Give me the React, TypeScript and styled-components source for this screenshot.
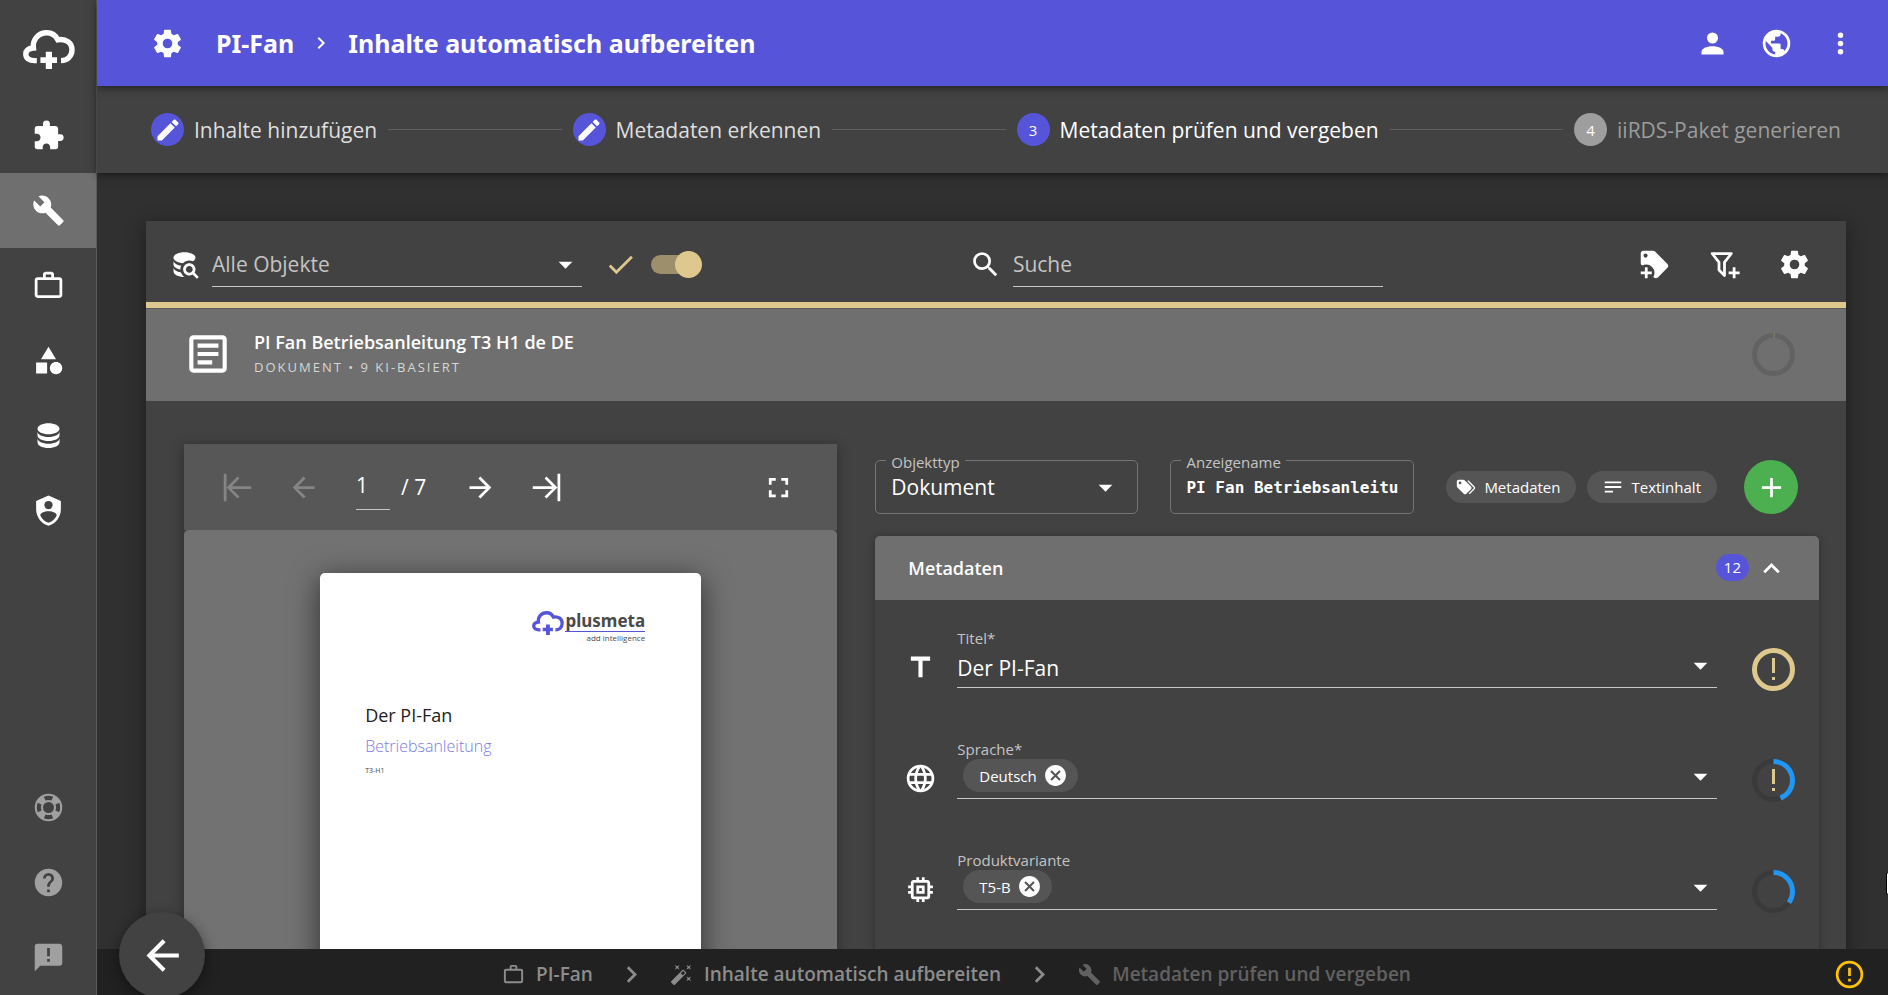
import React from "react";
import styled, { createGlobalStyle, css } from "styled-components";

const color = {
  primary: "#5654d8",
  gold: "#dec88d",
  surface: "#424242",
  page: "#303030",
  bar: "#6f6f6f",
  chip: "#555555",
  footer: "#212121",
  textSoft: "#c4c4c4",
  muted: "#a0a0a0",
  blue: "#2196f3",
};

const GlobalStyle = createGlobalStyle`
  * { box-sizing: border-box; }
  body {
    margin: 0;
    background: ${color.page};
    color: #fff;
    font-family: "Open Sans", "Noto Sans", sans-serif;
    font-size: 21px;
  }
  button, input, select { font: inherit; color: inherit; }
`;

const paths = {
  puzzle:
    "M20.5,11H19V7C19,5.89 18.1,5 17,5H13V3.5A2.5,2.5 0 0,0 10.5,1A2.5,2.5 0 0,0 8,3.5V5H4A2,2 0 0,0 2,7V10.8H3.5C5,10.8 6.2,12 6.2,13.5C6.2,15 5,16.2 3.5,16.2H2V20A2,2 0 0,0 4,22H7.8V20.5C7.8,19 9,17.8 10.5,17.8C12,17.8 13.2,19 13.2,20.5V22H17A2,2 0 0,0 19,20V16H20.5A2.5,2.5 0 0,0 23,13.5A2.5,2.5 0 0,0 20.5,11Z",
  wrench:
    "M22.7,19L13.6,9.9C14.5,7.6 14,4.9 12.1,3C10.1,1 7.1,0.6 4.7,1.7L9,6L6,9L1.6,4.7C0.4,7.1 0.9,10.1 2.9,12.1C4.8,14 7.5,14.5 9.8,13.6L18.9,22.7C19.3,23.1 19.9,23.1 20.3,22.7L22.6,20.4C23.1,20 23.1,19.3 22.7,19Z",
  briefcase:
    "M20,6C20.58,6 21.05,6.2 21.42,6.59C21.8,7 22,7.45 22,8V19C22,19.55 21.8,20 21.42,20.41C21.05,20.8 20.58,21 20,21H4C3.42,21 2.95,20.8 2.58,20.41C2.2,20 2,19.55 2,19V8C2,7.45 2.2,7 2.58,6.59C2.95,6.2 3.42,6 4,6H8V4C8,3.42 8.2,2.95 8.58,2.58C8.95,2.2 9.42,2 10,2H14C14.58,2 15.05,2.2 15.42,2.58C15.8,2.95 16,3.42 16,4V6H20M4,8V19H20V8H4M14,6V4H10V6H14Z",
  shape:
    "M11,13.5V21.5H3V13.5H11M12,2L17.5,11H6.5L12,2M17.5,13C20,13 22,15 22,17.5C22,20 20,22 17.5,22C15,22 13,20 13,17.5C13,15 15,13 17.5,13Z",
  database:
    "M12,3C7.58,3 4,4.79 4,7C4,9.21 7.58,11 12,11C16.42,11 20,9.21 20,7C20,4.79 16.42,3 12,3M4,9V12C4,14.21 7.58,16 12,16C16.42,16 20,14.21 20,12V9C20,11.21 16.42,13 12,13C7.58,13 4,11.21 4,9M4,14V17C4,19.21 7.58,21 12,21C16.42,21 20,19.21 20,17V14C20,16.21 16.42,18 12,18C7.58,18 4,16.21 4,14Z",
  shield:
    "M12,1L3,5V11C3,16.55 6.84,21.74 12,23C17.16,21.74 21,16.55 21,11V5L12,1M12,5A3,3 0 0,1 15,8A3,3 0 0,1 12,11A3,3 0 0,1 9,8A3,3 0 0,1 12,5M17.13,17C15.92,18.85 14.11,20.24 12,20.92C9.89,20.24 8.08,18.85 6.87,17C6.53,16.5 6.24,16 6,15.47C6,13.82 8.71,12.47 12,12.47C15.29,12.47 18,13.79 18,15.47C17.76,16 17.47,16.5 17.13,17Z",
  lifebuoy:
    "M19.79,15.41C20.74,13.24 20.74,10.75 19.79,8.59L17.05,9.83C17.65,11.21 17.65,12.78 17.06,14.17L19.79,15.41M15.42,4.21C13.25,3.26 10.76,3.26 8.59,4.21L9.83,6.94C11.22,6.35 12.79,6.35 14.18,6.95L15.42,4.21M4.21,8.58C3.26,10.76 3.26,13.24 4.21,15.42L6.95,14.17C6.35,12.79 6.35,11.21 6.95,9.82L4.21,8.58M8.59,19.79C10.76,20.74 13.25,20.74 15.42,19.78L14.18,17.05C12.8,17.65 11.22,17.65 9.84,17.06L8.59,19.79M12,2A10,10 0 0,1 22,12A10,10 0 0,1 12,22A10,10 0 0,1 2,12A10,10 0 0,1 12,2M12,8A4,4 0 0,0 8,12A4,4 0 0,0 12,16A4,4 0 0,0 16,12A4,4 0 0,0 12,8Z",
  help:
    "M15.07,11.25L14.17,12.17C13.45,12.89 13,13.5 13,15H11V14.5C11,13.39 11.45,12.39 12.17,11.67L13.41,10.41C13.78,10.05 14,9.55 14,9C14,7.89 13.1,7 12,7A2,2 0 0,0 10,9H8A4,4 0 0,1 12,5A4,4 0 0,1 16,9C16,9.88 15.64,10.67 15.07,11.25M13,19H11V17H13M12,2A10,10 0 0,0 2,12A10,10 0 0,0 12,22A10,10 0 0,0 22,12C22,6.47 17.5,2 12,2Z",
  feedback:
    "M13,11H11V5H13M13,15H11V13H13M20,2H4A2,2 0 0,0 2,4V22L6,18H20A2,2 0 0,0 22,16V4C22,2.89 21.1,2 20,2Z",
  cog:
    "M12,15.5A3.5,3.5 0 0,1 8.5,12A3.5,3.5 0 0,1 12,8.5A3.5,3.5 0 0,1 15.5,12A3.5,3.5 0 0,1 12,15.5M19.43,12.97C19.47,12.65 19.5,12.33 19.5,12C19.5,11.67 19.47,11.34 19.43,11L21.54,9.37C21.73,9.22 21.78,8.95 21.66,8.73L19.66,5.27C19.54,5.05 19.27,4.96 19.05,5.05L16.56,6.05C16.04,5.66 15.5,5.32 14.87,5.07L14.5,2.42C14.46,2.18 14.25,2 14,2H10C9.75,2 9.54,2.18 9.5,2.42L9.13,5.07C8.5,5.32 7.96,5.66 7.44,6.05L4.95,5.05C4.73,4.96 4.46,5.05 4.34,5.27L2.34,8.73C2.21,8.95 2.27,9.22 2.46,9.37L4.57,11C4.53,11.34 4.5,11.67 4.5,12C4.5,12.33 4.53,12.65 4.57,12.97L2.46,14.63C2.27,14.78 2.21,15.05 2.34,15.27L4.34,18.73C4.46,18.95 4.73,19.03 4.95,18.95L7.44,17.94C7.96,18.34 8.5,18.68 9.13,18.93L9.5,21.58C9.54,21.82 9.75,22 10,22H14C14.25,22 14.46,21.82 14.5,21.58L14.87,18.93C15.5,18.67 16.04,18.34 16.56,17.94L19.05,18.95C19.27,19.03 19.54,18.95 19.66,18.73L21.66,15.27C21.78,15.05 21.73,14.78 21.54,14.63L19.43,12.97Z",
  earth:
    "M17.9,17.39C17.64,16.59 16.89,16 16,16H15V13A1,1 0 0,0 14,12H8V10H10A1,1 0 0,0 11,9V7H13A2,2 0 0,0 15,5V4.59C17.93,5.77 20,8.64 20,12C20,14.08 19.2,15.97 17.9,17.39M11,19.93C7.05,19.44 4,16.08 4,12C4,11.38 4.08,10.78 4.21,10.21L9,15V16A2,2 0 0,0 11,18M12,2A10,10 0 0,0 2,12A10,10 0 0,0 12,22A10,10 0 0,0 22,12A10,10 0 0,0 12,2Z",
  account:
    "M12,4A4,4 0 0,1 16,8A4,4 0 0,1 12,12A4,4 0 0,1 8,8A4,4 0 0,1 12,4M12,14C16.42,14 20,15.79 20,18V20H4V18C4,15.79 7.58,14 12,14Z",
  dots:
    "M12,16A2,2 0 0,1 14,18A2,2 0 0,1 12,20A2,2 0 0,1 10,18A2,2 0 0,1 12,16M12,10A2,2 0 0,1 14,12A2,2 0 0,1 12,14A2,2 0 0,1 10,12A2,2 0 0,1 12,10M12,4A2,2 0 0,1 14,6A2,2 0 0,1 12,8A2,2 0 0,1 10,6A2,2 0 0,1 12,4Z",
  pencil:
    "M20.71,7.04C21.1,6.65 21.1,6 20.71,5.63L18.37,3.29C18,2.9 17.35,2.9 16.96,3.29L15.12,5.12L18.87,8.87M3,17.25V21H6.75L17.81,9.93L14.06,6.18L3,17.25Z",
  databaseSearch:
    "M18.68,12.32C16.92,10.56 14.07,10.57 12.32,12.33C10.56,14.09 10.56,16.94 12.32,18.69C13.81,20.17 16.11,20.43 17.89,19.32L21,22.39L22.39,21L19.3,17.89C20.43,16.12 20.17,13.8 18.68,12.32M17.27,17.27C16.29,18.25 14.71,18.24 13.73,17.27C12.76,16.29 12.76,14.71 13.74,13.73C14.71,12.76 16.29,12.76 17.27,13.73C18.24,14.71 18.24,16.29 17.27,17.27M10.9,20.1C10.25,19.44 9.74,18.65 9.42,17.78C6.27,17.25 4,15.76 4,14V17C4,19.21 7.58,21 12,21C11.6,20.74 11.23,20.44 10.9,20.1M4,9V12C4,13.68 6.07,15.12 9,15.7C9,15.63 9,15.57 9,15.5C9,14.57 9.2,13.65 9.58,12.81C6.34,12.3 4,10.79 4,9M12,3C7.58,3 4,4.79 4,7C4,9 7,10.68 10.85,11H10.9C12.1,9.74 13.76,9 15.5,9C16.41,9 17.31,9.19 18.14,9.56C19.17,9.09 19.87,8.12 20,7C20,4.79 16.42,3 12,3Z",
  magnify:
    "M9.5,3A6.5,6.5 0 0,1 16,9.5C16,11.11 15.41,12.59 14.44,13.73L14.71,14H15.5L20.5,19L19,20.5L14,15.5V14.71L13.73,14.44C12.59,15.41 11.11,16 9.5,16A6.5,6.5 0 0,1 3,9.5A6.5,6.5 0 0,1 9.5,3M9.5,5C7,5 5,7 5,9.5C5,12 7,14 9.5,14C12,14 14,12 14,9.5C14,7 12,5 9.5,5Z",
  check: "M21,7L9,19L3.5,13.5L4.91,12.09L9,16.17L19.59,5.59L21,7Z",
  caret: "M7,10L12,15L17,10H7Z",
  tagPlus:
    "M21.41,11.58L12.41,2.58C12.04,2.21 11.53,2 11,2H4A2,2 0 0,0 2,4V11C2,11.53 2.21,12.04 2.59,12.41L3,12.81C3.9,12.27 4.94,12 6,12A6,6 0 0,1 12,18C12,19.06 11.72,20.09 11.18,21L11.58,21.4C11.95,21.78 12.47,22 13,22C13.53,22 14.04,21.79 14.41,21.41L21.41,14.41C21.79,14.04 22,13.53 22,13C22,12.47 21.79,11.96 21.41,11.58M5.5,7A1.5,1.5 0 0,1 4,5.5A1.5,1.5 0 0,1 5.5,4A1.5,1.5 0 0,1 7,5.5A1.5,1.5 0 0,1 5.5,7M10,19H7V22H5V19H2V17H5V14H7V17H10V19Z",
  filterPlus:
    "M15 17H18V14H20V17H23V19H20V22H18V19H15V17M13 19.88C13.04 20.18 12.94 20.5 12.71 20.71C12.32 21.1 11.69 21.1 11.3 20.71L7.29 16.7C7.06 16.47 6.96 16.16 7 15.87V10.75L2.21 4.62C1.87 4.19 1.95 3.56 2.38 3.22C2.57 3.08 2.78 3 3 3H17C17.22 3 17.43 3.08 17.62 3.22C18.05 3.56 18.13 4.19 17.79 4.62L13 10.75V19.88M5.04 5L9 10.06V15.58L11 17.58V10.05L14.96 5H5.04Z",
  document:
    "M5,3C3.89,3 3,3.89 3,5V19C3,20.11 3.89,21 5,21H19C20.11,21 21,20.11 21,19V5C21,3.89 20.11,3 19,3H5M5,5H19V19H5V5M7,7V9H17V7H7M7,11V13H17V11H7M7,15V17H14V15H7Z",
  arrowLeft: "M20,11V13H8L13.5,18.5L12.08,19.92L4.16,12L12.08,4.08L13.5,5.5L8,11H20Z",
  arrowRight: "M4,11V13H16L10.5,18.5L11.92,19.92L19.84,12L11.92,4.08L10.5,5.5L16,11H4Z",
  first: "M4.08,11.92L12,4L13.41,5.41L7.83,11H22V13H7.83L13.41,18.59L12,20L4.08,12.08V11.92M2,22V2H4V22H2Z",
  last: "M19.92,12.08L12,20L10.59,18.59L16.17,13H2V11H16.17L10.59,5.41L12,4L19.92,11.92V12.08M22,2V22H20V2H22Z",
  fullscreen: "M5,5H10V7H7V10H5V5M14,5H19V10H17V7H14V5M17,14H19V19H14V17H17V14M10,17V19H5V14H7V17H10Z",
  tags:
    "M5.5,9A1.5,1.5 0 0,0 7,7.5A1.5,1.5 0 0,0 5.5,6A1.5,1.5 0 0,0 4,7.5A1.5,1.5 0 0,0 5.5,9M17.41,11.58C17.77,11.94 18,12.44 18,13C18,13.55 17.78,14.05 17.41,14.41L12.41,19.41C12.05,19.77 11.55,20 11,20C10.45,20 9.95,19.78 9.58,19.41L2.59,12.42C2.22,12.05 2,11.55 2,11V6C2,4.89 2.89,4 4,4H9C9.55,4 10.05,4.22 10.41,4.58L17.41,11.58M13.54,5.71L14.54,4.71L21.41,11.58C21.78,11.94 22,12.45 22,13C22,13.55 21.78,14.05 21.42,14.41L16.04,19.79L15.04,18.79L20.75,13L13.54,5.71Z",
  lines: "M21,6V8H3V6H21M3,18H12V16H3V18M3,13H21V11H3V13Z",
  plus: "M19,13H13V19H11V13H5V11H11V5H13V11H19V13Z",
  chevronUp: "M7.41,15.41L12,10.83L16.59,15.41L18,14L12,8L6,14L7.41,15.41Z",
  chevronRight: "M8.59,16.58L13.17,12L8.59,7.41L10,6L16,12L10,18L8.59,16.58Z",
  title: "M5,4V7H10.5V19H13.5V7H19V4H5Z",
  web:
    "M16.36,14C16.44,13.34 16.5,12.68 16.5,12C16.5,11.32 16.44,10.66 16.36,10H19.74C19.9,10.64 20,11.31 20,12C20,12.69 19.9,13.36 19.74,14M14.59,19.56C15.19,18.45 15.65,17.25 15.97,16H18.92C17.96,17.65 16.43,18.93 14.59,19.56M14.34,14H9.66C9.56,13.34 9.5,12.68 9.5,12C9.5,11.32 9.56,10.65 9.66,10H14.34C14.43,10.65 14.5,11.32 14.5,12C14.5,12.68 14.43,13.34 14.34,14M12,19.96C11.17,18.76 10.5,17.43 10.09,16H13.91C13.5,17.43 12.83,18.76 12,19.96M8,8H5.08C6.03,6.34 7.57,5.06 9.4,4.44C8.8,5.55 8.35,6.75 8,8M5.08,16H8C8.35,17.25 8.8,18.45 9.4,19.56C7.57,18.93 6.03,17.65 5.08,16M4.26,14C4.1,13.36 4,12.69 4,12C4,11.31 4.1,10.64 4.26,10H7.64C7.56,10.66 7.5,11.32 7.5,12C7.5,12.68 7.56,13.34 7.64,14M12,4.03C12.83,5.23 13.5,6.57 13.91,8H10.09C10.5,6.57 11.17,5.23 12,4.03M18.92,8H15.97C15.65,6.75 15.19,5.55 14.59,4.44C16.43,5.07 17.96,6.34 18.92,8M12,2C6.47,2 2,6.5 2,12A10,10 0 0,0 12,22A10,10 0 0,0 22,12A10,10 0 0,0 12,2Z",
  chip:
    "M17,17H7V7H17M21,11V9H19V7C19,5.89 18.1,5 17,5H15V3H13V5H11V3H9V5H7C5.89,5 5,5.89 5,7V9H3V11H5V13H3V15H5V17A2,2 0 0,0 7,19H9V21H11V19H13V21H15V19H17A2,2 0 0,0 19,17V15H21V13H19V11M13,13H11V11H13M15,9H9V15H15V9Z",
  closeCircle:
    "M12,2C17.53,2 22,6.47 22,12C22,17.53 17.53,22 12,22C6.47,22 2,17.53 2,12C2,6.47 6.47,2 12,2M15.59,7L12,10.59L8.41,7L7,8.41L10.59,12L7,15.59L8.41,17L12,13.41L15.59,17L17,15.59L13.41,12L17,8.41L15.59,7Z",
  alert:
    "M11,15H13V17H11V15M11,7H13V13H11V7M12,2C6.47,2 2,6.5 2,12A10,10 0 0,0 12,22A10,10 0 0,0 22,12A10,10 0 0,0 12,2M12,20A8,8 0 0,1 4,12A8,8 0 0,1 12,4A8,8 0 0,1 20,12A8,8 0 0,1 12,20Z",
  wand:
    "M7.5,5.6L5,7L6.4,4.5L5,2L7.5,3.4L10,2L8.6,4.5L10,7L7.5,5.6M19.5,15.4L22,14L20.6,16.5L22,19L19.5,17.6L17,19L18.4,16.5L17,14L19.5,15.4M22,2L20.6,4.5L22,7L19.5,5.6L17,7L18.4,4.5L17,2L19.5,3.4L22,2M13.34,12.78L15.78,10.34L13.66,8.22L11.22,10.66L13.34,12.78M14.37,7.29L16.71,9.63C17.1,10 17.1,10.65 16.71,11.04L5.04,22.71C4.65,23.1 4,23.1 3.63,22.71L1.29,20.37C0.9,20 0.9,19.35 1.29,18.96L12.96,7.29C13.35,6.9 14,6.9 14.37,7.29Z",
};

type IconName = keyof typeof paths;

const Svg = styled.svg`
  display: block;
  flex: none;
  fill: currentColor;
`;

function Icon({ name, size = 33 }: { name: IconName; size?: number }) {
  return (
    <Svg width={size} height={size} viewBox="0 0 24 24" aria-hidden="true">
      <path d={paths[name]} fillRule="evenodd" />
    </Svg>
  );
}

function CloudLogo({ width }: { width: number }) {
  return (
    <Svg width={width} height={(width * 3) / 4} viewBox="0 0 52 39" aria-hidden="true">
      <path
        d="M13.8 30.6H11.4C6.2 30.6 2.8 28 2.8 24.2C2.8 20.6 5.6 18.4 10.4 18C9.2 9.6 15.6 2.8 23.6 2.8C28.8 2.8 32.6 5.4 34.8 9.8C43 8.2 49 13 49 19.8C49 26.2 44.4 30.6 38 30.6"
        fill="none"
        stroke="currentColor"
        strokeWidth="5.4"
      />
      <path d="M22.8 21.8H29V27.3H34V33H29V39H22.8V33H17.4V27.3H22.8Z" />
    </Svg>
  );
}

/* ---------- Shell ---------- */

const Shell = styled.div`
  display: flex;
  height: 100vh;
  overflow: hidden;
`;

const Sidebar = styled.nav`
  display: flex;
  flex-direction: column;
  flex: none;
  width: 97px;
  background: ${color.surface};
  border-right: 1px solid #5c5c5c;
`;

const Brand = styled.a`
  display: flex;
  justify-content: center;
  flex: none;
  height: 98px;
  padding: 30px 0 0 2px;
  color: #fff;
`;

const SideLink = styled.a<{ $active?: boolean; $muted?: boolean }>`
  display: flex;
  align-items: center;
  justify-content: center;
  flex: none;
  height: 75px;
  color: ${(p) => (p.$muted ? color.muted : "#fff")};
  background: ${(p) => (p.$active ? color.bar : "transparent")};
`;

const Spacer = styled.div`
  flex: 1;
`;

const Column = styled.div`
  display: flex;
  flex-direction: column;
  flex: 1;
  min-width: 0;
`;

const Header = styled.header`
  display: flex;
  align-items: center;
  flex: none;
  height: 86px;
  padding: 0 16px 0 37px;
  background: ${color.primary};
  box-shadow: 0 2px 8px rgba(0, 0, 0, 0.5);
  z-index: 3;
`;

const IconButton = styled.button<{ $width?: number; $color?: string }>`
  display: flex;
  align-items: center;
  justify-content: center;
  flex: none;
  width: ${(p) => p.$width ?? 66}px;
  height: 66px;
  padding: 0;
  border: 0;
  background: none;
  color: ${(p) => p.$color ?? "#fff"};
  cursor: pointer;
  &:disabled {
    color: #858585;
  }
`;

const Crumbs = styled.div`
  display: flex;
  align-items: center;
  flex: 1;
  gap: 15px;
  padding-left: 16px;
  font-family: "Noto Sans", "Open Sans", sans-serif;
  font-size: 25px;
  font-weight: 700;
  white-space: nowrap;
  a {
    color: inherit;
    text-decoration: none;
  }
  h1 {
    margin: 0;
    font: inherit;
  }
`;

const Stepper = styled.ol`
  display: flex;
  align-items: center;
  gap: 11px;
  flex: none;
  height: 87px;
  margin: 0;
  padding: 0 47px 0 54px;
  list-style: none;
  background: ${color.surface};
  box-shadow: 0 2px 8px rgba(0, 0, 0, 0.5);
  z-index: 2;
`;

const Step = styled.li<{ $state: "done" | "active" | "open" }>`
  display: flex;
  align-items: center;
  gap: 10px;
  white-space: nowrap;
  color: ${(p) => (p.$state === "done" ? "#dedede" : p.$state === "active" ? "#fff" : "#9c9c9c")};
`;

const StepDot = styled.span<{ $open?: boolean }>`
  display: flex;
  align-items: center;
  justify-content: center;
  width: 33px;
  height: 33px;
  border-radius: 50%;
  background: ${(p) => (p.$open ? "#9e9e9e" : color.primary)};
  color: #fff;
  font-size: 15px;
`;

const StepLine = styled.li`
  flex: 1;
  height: 1px;
  background: #5e5e5e;
`;

const Main = styled.main`
  flex: 1;
  min-height: 0;
  padding: 48px 42px 0 49px;
  overflow: auto;
  scrollbar-width: none;
`;

const Card = styled.section`
  background: ${color.surface};
  box-shadow: 0 4px 18px rgba(0, 0, 0, 0.4);
`;

/* ---------- Object toolbar ---------- */

const Toolbar = styled.div`
  display: grid;
  grid-template-columns: 14fr 15fr;
  align-items: center;
  height: 87px;
  padding: 6px 19px 0 22px;
  border-bottom: 6px solid ${color.gold};
`;

const ToolGroup = styled.div`
  display: flex;
  align-items: center;
  gap: 11px;
`;

const Caret = styled.span`
  position: absolute;
  right: 0;
  top: 1px;
  color: #fff;
  pointer-events: none;
`;

const Underlined = styled.div<{ $width?: number }>`
  display: flex;
  align-items: center;
  position: relative;
  height: 40px;
  border-bottom: 1px solid #c6c6c6;
  color: ${color.textSoft};
  ${(p) =>
    p.$width
      ? css`
          flex: 0 1 ${p.$width}px;
          height: 44px;
          ${Caret} {
            top: 5px;
          }
        `
      : ""}
`;

const fieldText = css`
  width: 100%;
  min-width: 0;
  height: 38px;
  padding: 0;
  border: 0;
  outline: 0;
  background: none;
  appearance: none;
  &::placeholder {
    color: ${color.textSoft};
    opacity: 1;
  }
`;

const Select = styled.select<{ $bright?: boolean }>`
  ${fieldText}
  color: ${(p) => (p.$bright ? "#fff" : "inherit")};
  option {
    color: #fff;
    background: ${color.surface};
  }
`;

const TextInput = styled.input`
  ${fieldText}
`;

const CheckMark = styled.span`
  margin-left: 11px;
  color: ${color.gold};
`;

const Switch = styled.input`
  appearance: none;
  position: relative;
  width: 50px;
  height: 19px;
  margin: 0 0 0 3px;
  border-radius: 10px;
  background: #9d8f6b;
  &::after {
    content: "";
    position: absolute;
    right: -1px;
    top: -4px;
    width: 27px;
    height: 27px;
    border-radius: 50%;
    background: ${color.gold};
  }
`;

const Actions = styled.div`
  display: flex;
  gap: 4px;
  margin-left: auto;
`;

/* ---------- Document row ---------- */

const DocRow = styled.div`
  display: flex;
  align-items: center;
  height: 93px;
  padding: 0 51px 2px 37px;
  border-top: 1px solid #5c5c5c;
  background: ${color.bar};
`;

const DocText = styled.div`
  flex: 1;
  padding-left: 21px;
  h2 {
    margin: 0;
    font-size: 18px;
    font-weight: 600;
    line-height: 26px;
  }
  p {
    margin: 0;
    font-size: 13px;
    line-height: 24px;
    letter-spacing: 2px;
    text-transform: uppercase;
    color: #d6d6d6;
  }
`;

const Split = styled.div`
  display: grid;
  grid-template-columns: 9fr 13fr;
  gap: 38px;
  padding: 43px 27px 40px 38px;
`;

/* ---------- Viewer ---------- */

const Viewer = styled.div`
  display: flex;
  flex-direction: column;
  min-height: 640px;
  box-shadow: 0 2px 12px rgba(0, 0, 0, 0.35);
`;

const ViewerBar = styled.div`
  display: flex;
  align-items: center;
  height: 86px;
  padding: 0 26px 0 20px;
  background: #575757;
`;

const PageInput = styled.input`
  width: 34px;
  height: 46px;
  margin: 0 11px 0 20px;
  padding: 0 0 3px;
  border: 0;
  border-bottom: 1px solid #c6c6c6;
  outline: 0;
  background: none;
`;

const PageCount = styled.span`
  width: 46px;
  white-space: pre;
`;

const Canvas = styled.div`
  display: flex;
  justify-content: center;
  flex: 1;
  padding-top: 43px;
  border-radius: 5px 5px 0 0;
  background: #727272;
`;

const Sheet = styled.article`
  width: 381px;
  padding: 38px 56px 0 45px;
  border-radius: 5px;
  background: #fff;
  color: #222;
  box-shadow: 0 6px 30px rgba(0, 0, 0, 0.6);
  h3 {
    margin: 58px 0 0;
    font-size: 18px;
    font-weight: 400;
    line-height: 26px;
  }
  h4 {
    margin: 4px 0 0;
    font-size: 16px;
    font-weight: 300;
    line-height: 28px;
    color: #7d7be2;
  }
  p {
    margin: 4px 0 0;
    font-size: 7px;
    line-height: 14px;
    color: #444;
  }
`;

const SheetLogo = styled.div`
  display: flex;
  justify-content: flex-end;
  gap: 1px;
  color: ${color.primary};
`;

const WordMark = styled.div`
  display: flex;
  flex-direction: column;
  align-items: flex-end;
  color: #4a4a4a;
  strong {
    font-family: "Noto Sans", sans-serif;
    font-size: 17px;
    font-weight: 700;
    line-height: 20px;
    border-bottom: 1px solid ${color.primary};
  }
  span {
    font-size: 8px;
    line-height: 12px;
  }
`;

/* ---------- Metadata ---------- */

const Details = styled.div`
  min-width: 0;
  padding-top: 16px;
`;

const DetailsBar = styled.div`
  display: flex;
  align-items: center;
  margin-bottom: 22px;
  padding-right: 21px;
`;

const Outlined = styled.div<{ $grow: number }>`
  display: flex;
  align-items: center;
  position: relative;
  flex: ${(p) => p.$grow} 1 0;
  min-width: 0;
  height: 54px;
  margin-right: 32px;
  padding: 0 15px;
  border: 1px solid #757575;
  border-radius: 5px;
  label {
    position: absolute;
    top: -9px;
    left: 10px;
    padding: 0 5px;
    background: ${color.surface};
    color: ${color.textSoft};
    font-size: 15px;
    line-height: 20px;
  }
  ${Caret} {
    right: 15px;
    top: 10px;
  }
`;

const MonoInput = styled(TextInput)`
  font-family: "DejaVu Sans Mono", monospace;
  font-size: 16px;
  font-weight: 700;
`;

const PillButton = styled.button<{ $inset: number }>`
  display: flex;
  align-items: center;
  flex: none;
  gap: 7px;
  height: 32px;
  margin-right: 11px;
  padding: 0 16px 0 ${(p) => p.$inset}px;
  border: 0;
  border-radius: 16px;
  background: ${color.chip};
  font-size: 15px;
  white-space: nowrap;
`;

const AddButton = styled.button`
  display: flex;
  align-items: center;
  justify-content: center;
  flex: none;
  width: 54px;
  height: 54px;
  margin-left: 16px;
  padding: 0;
  border: 0;
  border-radius: 50%;
  background: #4caf50;
`;

const Panel = styled.section`
  padding-bottom: 40px;
  border-radius: 5px;
  box-shadow: 0 1px 8px rgba(0, 0, 0, 0.3);
`;

const PanelHead = styled.button`
  display: flex;
  align-items: center;
  width: 100%;
  height: 64px;
  padding: 0 31px 0 33px;
  border: 0;
  border-radius: 5px 5px 0 0;
  background: ${color.bar};
  font-size: 18px;
  font-weight: 600;
  text-align: left;
`;

const Count = styled.span`
  margin: 0 6px 2px auto;
  padding: 0 8px;
  border-radius: 14px;
  background: ${color.primary};
  font-size: 15px;
  font-weight: 400;
  line-height: 27px;
`;

const Row = styled.div`
  display: flex;
  align-items: flex-start;
  height: 111px;
  padding: 28px 24px 0 29px;
`;

const RowIcon = styled.span`
  padding-top: 23px;
`;

const RowField = styled.div`
  flex: 1;
  min-width: 0;
  margin: 0 35px 0 20px;
  label {
    display: block;
    color: ${color.textSoft};
    font-size: 15px;
    line-height: 20px;
  }
`;

const RowStatus = styled.span`
  padding-top: 20px;
`;

const Chip = styled.span`
  display: flex;
  align-items: center;
  flex: none;
  gap: 6px;
  height: 33px;
  margin: 0 8px 6px 6px;
  padding: 0 10px 0 16px;
  border-radius: 17px;
  background: ${color.chip};
  color: #fff;
  font-size: 15px;
  button {
    display: flex;
    padding: 0;
    border: 0;
    background: none;
    color: #fff;
  }
`;

function Ring({
  percent,
  stroke = color.blue,
  warn,
}: {
  percent: number;
  stroke?: string;
  warn?: boolean;
}) {
  return (
    <Svg width={43} height={43} viewBox="0 0 43 43" role="img" aria-label={`${percent} %`}>
      <circle cx="21.5" cy="21.5" r="19" fill="none" stroke="rgba(0,0,0,0.11)" strokeWidth="5" />
      <circle
        cx="21.5"
        cy="21.5"
        r="19"
        fill="none"
        stroke={stroke}
        strokeWidth="5"
        pathLength="100"
        strokeDasharray={`${percent} 100`}
        transform="rotate(-90 21.5 21.5)"
      />
      {warn && <path d="M20 10H23V25H20ZM20 29H23V32H20Z" fill={color.gold} />}
    </Svg>
  );
}

/* ---------- Footer ---------- */

const Footer = styled.footer`
  display: flex;
  align-items: center;
  flex: none;
  height: 46px;
  padding: 4px 6px 0 0;
  background: ${color.footer};
  z-index: 2;
`;

const Trail = styled.nav`
  display: flex;
  align-items: center;
  justify-content: center;
  flex: 1;
  gap: 22px;
  color: #8c8c8c;
`;

const TrailLink = styled.a<{ $current?: boolean }>`
  display: flex;
  align-items: center;
  gap: 11px;
  color: ${(p) => (p.$current ? "#616161" : "#8c8c8c")};
  font-size: 19px;
  font-weight: 600;
  text-decoration: none;
  white-space: nowrap;
`;

const BackButton = styled.button`
  display: flex;
  align-items: center;
  justify-content: center;
  position: fixed;
  left: 119px;
  bottom: -3px;
  width: 86px;
  height: 86px;
  padding: 0;
  border: 0;
  border-radius: 50%;
  background: ${color.surface};
  box-shadow: 0 4px 14px rgba(0, 0, 0, 0.45);
  z-index: 4;
`;

const EdgeHandle = styled.div`
  position: fixed;
  right: 0;
  bottom: 101px;
  width: 2px;
  height: 21px;
  border: 1px solid #000;
  border-right-color: #fff;
  z-index: 4;
`;

const mainLinks: { icon: IconName; label: string; active?: boolean }[] = [
  { icon: "puzzle", label: "Erweiterungen" },
  { icon: "wrench", label: "Werkzeuge", active: true },
  { icon: "briefcase", label: "Projekte" },
  { icon: "shape", label: "Metadaten" },
  { icon: "database", label: "Datenquellen" },
  { icon: "shield", label: "Administration" },
];

const helpLinks: { icon: IconName; label: string }[] = [
  { icon: "lifebuoy", label: "Support" },
  { icon: "help", label: "Hilfe" },
  { icon: "feedback", label: "Feedback" },
];

const rows: {
  id: string;
  icon: IconName;
  label: string;
  value?: string;
  chip?: string;
  percent: number;
  stroke?: string;
  warn?: boolean;
}[] = [
  { id: "titel", icon: "title", label: "Titel*", value: "Der PI-Fan", percent: 100, stroke: color.gold, warn: true },
  { id: "sprache", icon: "web", label: "Sprache*", chip: "Deutsch", percent: 44, warn: true },
  { id: "variante", icon: "chip", label: "Produktvariante", chip: "T5-B", percent: 35 },
];

export default function App() {
  return (
    <>
      <GlobalStyle />
      <Shell>
        <Sidebar aria-label="Hauptnavigation">
          <Brand href="#" aria-label="Startseite">
            <CloudLogo width={52} />
          </Brand>
          {mainLinks.map((l) => (
            <SideLink key={l.icon} href="#" aria-label={l.label} $active={l.active}>
              <Icon name={l.icon} />
            </SideLink>
          ))}
          <Spacer />
          {helpLinks.map((l) => (
            <SideLink key={l.icon} href="#" aria-label={l.label} $muted>
              <Icon name={l.icon} />
            </SideLink>
          ))}
        </Sidebar>

        <Column>
          <Header>
            <IconButton aria-label="Einstellungen">
              <Icon name="cog" />
            </IconButton>
            <Crumbs>
              <a href="#">PI-Fan</a>
              <Icon name="chevronRight" size={24} />
              <h1>Inhalte automatisch aufbereiten</h1>
            </Crumbs>
            <IconButton $width={64} aria-label="Konto">
              <Icon name="account" />
            </IconButton>
            <IconButton $width={64} aria-label="Sprache wechseln">
              <Icon name="earth" />
            </IconButton>
            <IconButton $width={64} aria-label="Mehr">
              <Icon name="dots" />
            </IconButton>
          </Header>

          <Stepper>
            <Step $state="done">
              <StepDot>
                <Icon name="pencil" size={28} />
              </StepDot>
              Inhalte hinzufügen
            </Step>
            <StepLine role="presentation" />
            <Step $state="done">
              <StepDot>
                <Icon name="pencil" size={28} />
              </StepDot>
              Metadaten erkennen
            </Step>
            <StepLine role="presentation" />
            <Step $state="active">
              <StepDot>3</StepDot>
              Metadaten prüfen und vergeben
            </Step>
            <StepLine role="presentation" />
            <Step $state="open">
              <StepDot $open>4</StepDot>
              iiRDS-Paket generieren
            </Step>
          </Stepper>

          <Main>
            <Card>
              <Toolbar>
                <ToolGroup>
                  <Icon name="databaseSearch" />
                  <Underlined $width={370}>
                    <Select aria-label="Objekte filtern" defaultValue="alle">
                      <option value="alle">Alle Objekte</option>
                    </Select>
                    <Caret>
                      <Icon name="caret" />
                    </Caret>
                  </Underlined>
                  <CheckMark>
                    <Icon name="check" />
                  </CheckMark>
                  <Switch type="checkbox" role="switch" defaultChecked aria-label="Geprüfte anzeigen" />
                </ToolGroup>
                <ToolGroup>
                  <Icon name="magnify" />
                  <Underlined $width={370}>
                    <TextInput type="search" placeholder="Suche" aria-label="Suche" />
                  </Underlined>
                  <Actions>
                    <IconButton aria-label="Metadatum hinzufügen">
                      <Icon name="tagPlus" />
                    </IconButton>
                    <IconButton aria-label="Filter hinzufügen">
                      <Icon name="filterPlus" />
                    </IconButton>
                    <IconButton aria-label="Ansicht einstellen">
                      <Icon name="cog" />
                    </IconButton>
                  </Actions>
                </ToolGroup>
              </Toolbar>

              <DocRow>
                <Icon name="document" size={50} />
                <DocText>
                  <h2>PI Fan Betriebsanleitung T3 H1 de DE</h2>
                  <p>Dokument • 9 KI-basiert</p>
                </DocText>
                <Ring percent={1} stroke="#8a8468" />
              </DocRow>

              <Split>
                <Viewer>
                  <ViewerBar>
                    <IconButton disabled aria-label="Erste Seite">
                      <Icon name="first" />
                    </IconButton>
                    <IconButton disabled aria-label="Vorherige Seite">
                      <Icon name="arrowLeft" />
                    </IconButton>
                    <PageInput aria-label="Seite" defaultValue="1" />
                    <PageCount>/ 7</PageCount>
                    <IconButton aria-label="Nächste Seite">
                      <Icon name="arrowRight" />
                    </IconButton>
                    <IconButton aria-label="Letzte Seite">
                      <Icon name="last" />
                    </IconButton>
                    <Spacer />
                    <IconButton aria-label="Vollbild">
                      <Icon name="fullscreen" />
                    </IconButton>
                  </ViewerBar>
                  <Canvas>
                    <Sheet>
                      <SheetLogo>
                        <CloudLogo width={32} />
                        <WordMark>
                          <strong>plusmeta</strong>
                          <span>add intelligence</span>
                        </WordMark>
                      </SheetLogo>
                      <h3>Der PI-Fan</h3>
                      <h4>Betriebsanleitung</h4>
                      <p>T3-H1</p>
                    </Sheet>
                  </Canvas>
                </Viewer>

                <Details>
                  <DetailsBar>
                    <Outlined $grow={12}>
                      <label htmlFor="objekttyp">Objekttyp</label>
                      <Select id="objekttyp" $bright defaultValue="dokument">
                        <option value="dokument">Dokument</option>
                      </Select>
                      <Caret>
                        <Icon name="caret" />
                      </Caret>
                    </Outlined>
                    <Outlined $grow={11}>
                      <label htmlFor="anzeigename">Anzeigename</label>
                      <MonoInput id="anzeigename" defaultValue="PI Fan Betriebsanleitung T3 H1 de DE" />
                    </Outlined>
                    <PillButton $inset={9}>
                      <Icon name="tags" size={22} />
                      Metadaten
                    </PillButton>
                    <PillButton $inset={15}>
                      <Icon name="lines" size={22} />
                      Textinhalt
                    </PillButton>
                    <AddButton aria-label="Hinzufügen">
                      <Icon name="plus" />
                    </AddButton>
                  </DetailsBar>

                  <Panel>
                    <PanelHead aria-expanded="true">
                      Metadaten
                      <Count>12</Count>
                      <Icon name="chevronUp" />
                    </PanelHead>
                    {rows.map((r) => (
                      <Row key={r.id}>
                        <RowIcon>
                          <Icon name={r.icon} />
                        </RowIcon>
                        <RowField>
                          <label htmlFor={r.id}>{r.label}</label>
                          <Underlined>
                            {r.chip ? (
                              <>
                                <Chip>
                                  {r.chip}
                                  <button aria-label={`${r.chip} entfernen`}>
                                    <Icon name="closeCircle" size={25} />
                                  </button>
                                </Chip>
                                <TextInput id={r.id} />
                              </>
                            ) : (
                              <Select id={r.id} $bright defaultValue={r.value}>
                                <option>{r.value}</option>
                              </Select>
                            )}
                            <Caret>
                              <Icon name="caret" />
                            </Caret>
                          </Underlined>
                        </RowField>
                        <RowStatus>
                          <Ring percent={r.percent} stroke={r.stroke} warn={r.warn} />
                        </RowStatus>
                      </Row>
                    ))}
                  </Panel>
                </Details>
              </Split>
            </Card>
          </Main>

          <Footer>
            <Trail aria-label="Pfad">
              <TrailLink href="#">
                <Icon name="briefcase" size={23} />
                PI-Fan
              </TrailLink>
              <Icon name="chevronRight" />
              <TrailLink href="#">
                <Icon name="wand" size={23} />
                Inhalte automatisch aufbereiten
              </TrailLink>
              <Icon name="chevronRight" />
              <TrailLink href="#" $current aria-current="page">
                <Icon name="wrench" size={23} />
                Metadaten prüfen und vergeben
              </TrailLink>
            </Trail>
            <IconButton $color="#ffc107" aria-label="Hinweise">
              <Icon name="alert" />
            </IconButton>
          </Footer>
        </Column>

        <BackButton aria-label="Zurück">
          <Icon name="arrowLeft" size={49} />
        </BackButton>
        <EdgeHandle />
      </Shell>
    </>
  );
}
